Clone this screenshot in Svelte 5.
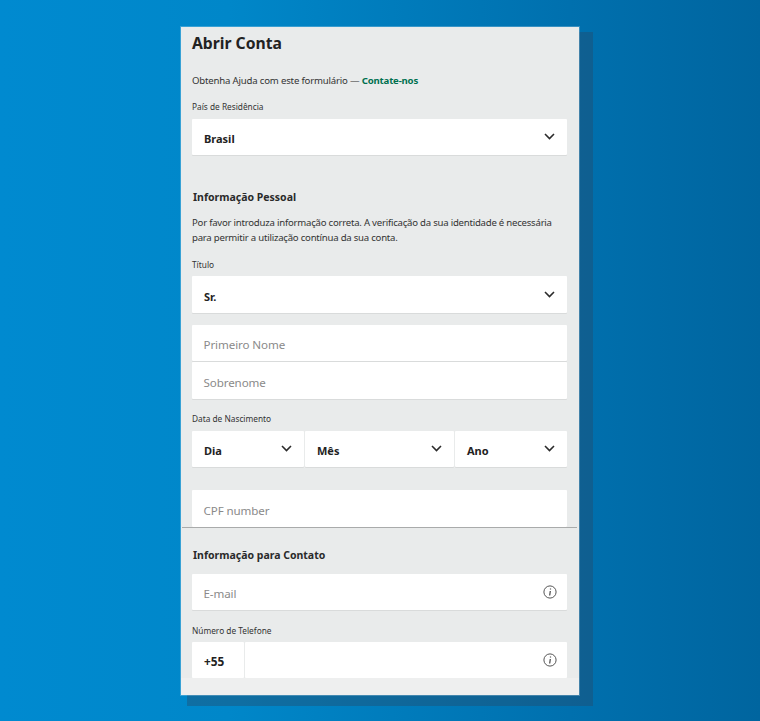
<script lang="ts">
	const dateParts = [
		{ name: 'Dia', cls: 'day' },
		{ name: 'Mês', cls: 'month' },
		{ name: 'Ano', cls: 'year' }
	];
</script>

{#snippet chevron()}
	<svg class="chevron" width="11" height="7" viewBox="0 0 11 7" fill="none" aria-hidden="true">
		<path d="M1 1 5.5 5.5 10 1" stroke="#2b2b2b" stroke-width="1.6" />
	</svg>
{/snippet}

{#snippet info()}
	<svg class="info" width="14" height="14" viewBox="0 0 14 14" fill="none" aria-hidden="true">
		<circle cx="7" cy="7" r="6.1" stroke="#555" stroke-width="1" />
		<path d="M7.5 3.4v1.2M7.3 6 6.7 10.5" stroke="#444" stroke-width="1.2" />
	</svg>
{/snippet}

<div class="page">
	<main class="card">
		<div class="body">
			<h1>Abrir Conta</h1>
			<p class="help">Obtenha Ajuda com este formulário — <a href="#contact">Contate-nos</a></p>

			<span class="label country-label">País de Residência</span>
			<div class="field select"><b>Brasil</b>{@render chevron()}</div>

			<h2 class="personal">Informação Pessoal</h2>
			<p class="intro">
				Por favor introduza informação correta. A verificação da sua identidade é necessária
				para permitir a utilização contínua da sua conta.
			</p>

			<span class="label title-label">Título</span>
			<div class="field select title-select"><b>Sr.</b>{@render chevron()}</div>

			<div class="field text first-name">Primeiro Nome</div>
			<div class="field text last-name">Sobrenome</div>

			<span class="label birth-label">Data de Nascimento</span>
			<div class="date-row">
				{#each dateParts as part (part.name)}
					<div class="field select {part.cls}"><b>{part.name}</b>{@render chevron()}</div>
				{/each}
			</div>

			<div class="field text cpf">CPF number</div>
		</div>

		<hr />

		<div class="body">
			<h2 class="contact">Informação para Contato</h2>
			<div class="field text email">E-mail {@render info()}</div>

			<span class="label phone-label">Número de Telefone</span>
			<div class="phone-row">
				<div class="field prefix"><b>+55</b></div>
				<div class="field number">{@render info()}</div>
			</div>
		</div>
		<div class="footer"></div>
	</main>
</div>

<style>
	:global(body) {
		margin: 0;
		font-family: 'Noto Sans', 'Open Sans', sans-serif;
	}

	.page {
		height: 721px;
		box-sizing: border-box;
		padding-top: 27px;
		overflow: hidden;
		isolation: isolate;
		background: linear-gradient(90deg, #008ad0 0%, #0087c9 30%, #0070ae 75%, #00659f 100%);
	}

	.card {
		position: relative;
		width: 398px;
		height: 668px;
		margin: 0 auto;
		display: flex;
		flex-direction: column;
		background: #e9ebeb;
		color: #2a2a2a;
		box-shadow: 0 0 0 1px rgba(255, 255, 255, 0.22);
	}

	/* offset backdrop behind the card */
	.card::before {
		content: '';
		position: absolute;
		z-index: -1;
		top: 5px;
		left: 6px;
		right: -14px;
		bottom: -11px;
		background: rgba(40, 70, 100, 0.38);
	}

	.body {
		padding: 0 12px 0 11px;
	}

	h1 {
		margin: 6px 0 0;
		font-size: 15.7px;
		line-height: 21px;
		font-weight: 700;
		color: #222;
	}

	.help {
		margin: 20px 0 0;
		font-size: 9.6px;
		letter-spacing: -0.18px;
		line-height: 14px;
		color: #333;
	}

	.help a {
		color: #00704f;
		font-weight: 700;
		text-decoration: none;
	}

	.label {
		display: block;
		font-size: 8.3px;
		line-height: 12px;
		color: #333;
	}

	.country-label { margin-top: 13px; }
	.title-label { margin-top: 14px; }
	.birth-label { margin-top: 14px; }
	.phone-label { margin-top: 15px; }

	.field {
		display: flex;
		align-items: center;
		justify-content: space-between;
		box-sizing: border-box;
		height: 37px;
		padding: 0 12px;
		background: #fff;
		box-shadow: 0 1px 0 #d9dbdb;
		border-radius: 1px;
	}

	.select {
		margin-top: 6px;
		height: 36px;
		font-size: 11px;
	}

	.select b, .prefix b {
		font-weight: 700;
		color: #222;
		padding-top: 2px;
	}

	.prefix b {
		font-size: 11.8px;
	}

	.chevron {
		margin-top: -1px;
	}

	h2 {
		margin: 0;
		font-size: 10.5px;
		line-height: 15px;
		font-weight: 700;
		color: #2a2a2a;
		padding-left: 1px;
	}

	.personal { margin-top: 35px; }

	.intro {
		margin: 10px 0 0;
		font-size: 9.6px;
		letter-spacing: -0.23px;
		line-height: 15px;
		color: #333;
	}

	.title-select { height: 37px; margin-top: 5px; }
	.title-select b { padding-top: 3px; }

	.text {
		font-size: 11.6px;
		letter-spacing: -0.1px;
		color: #8a8a8a;
		padding-top: 3px;
		padding-left: 11.5px;
	}

	.first-name { margin-top: 12px; height: 36px; }
	.last-name { margin-top: 1px; }

	.date-row {
		display: flex;
		gap: 1px;
		margin-top: 6px;
	}

	.date-row .select {
		margin-top: 0;
	}

	.day { width: 112px; }
	.month { width: 149px; }
	.year { flex: 1; }

	.cpf { margin-top: 23px; }

	hr {
		width: 395px;
		margin: 0 0 0 1px;
		border: none;
		height: 1px;
		background: #a9abab;
	}

	.contact { margin-top: 20px; }

	.email {
		margin-top: 11px;
		height: 36px;
	}

	.info {
		margin-right: -2px;
	}

	.email .info {
		margin-top: -3px;
	}

	.phone-row {
		display: flex;
		gap: 1px;
		margin-top: 5px;
	}

	.prefix {
		width: 52px;
		height: 36px;
		box-shadow: none;
	}

	.number {
		flex: 1;
		height: 36px;
		justify-content: flex-end;
		box-shadow: none;
	}

	.footer {
		flex: 1;
		background: #eeefef;
	}
</style>
